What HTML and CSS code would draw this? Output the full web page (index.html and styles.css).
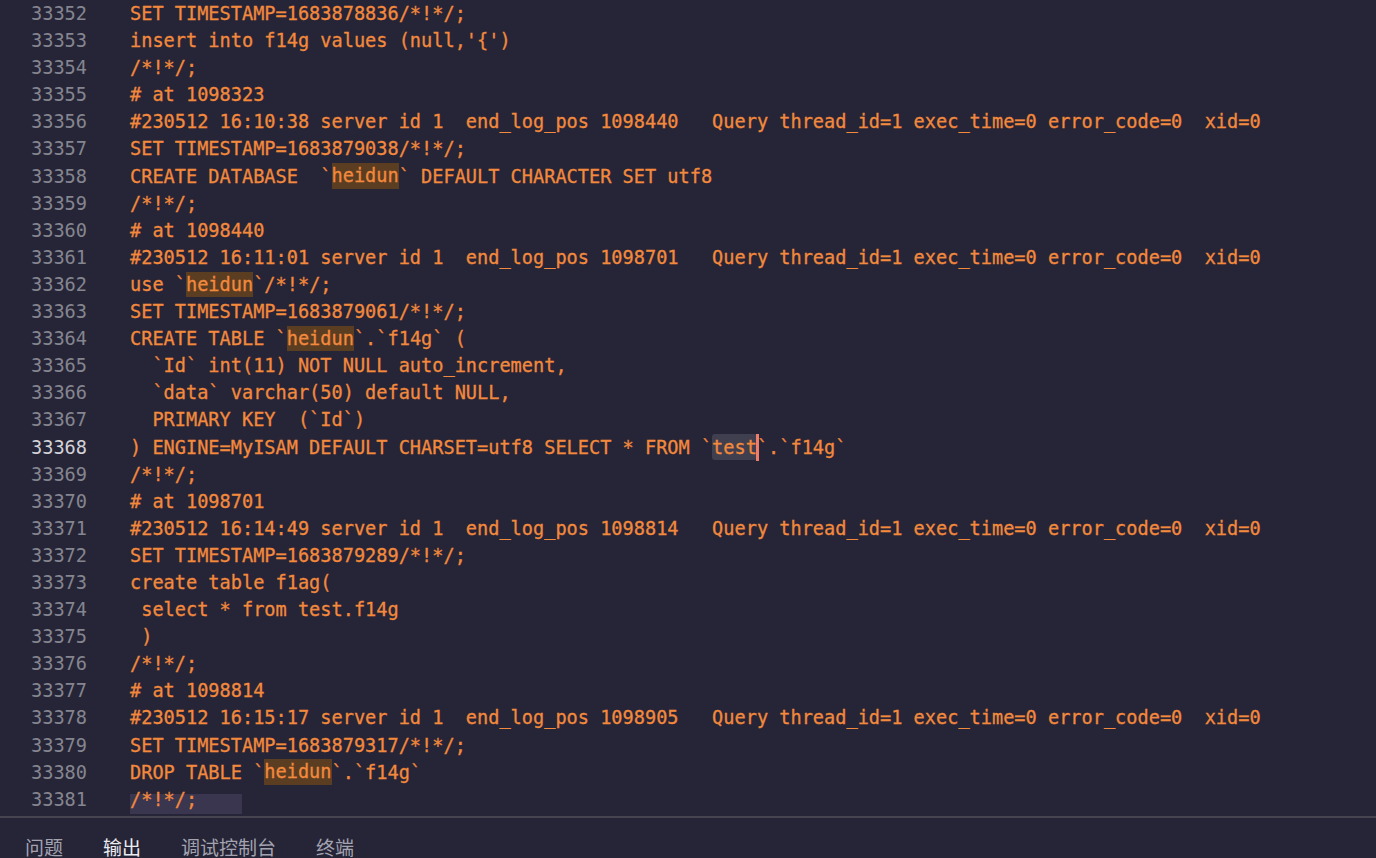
FILE: index.html
```html
<!DOCTYPE html>
<html lang="zh-CN">
<head>
    <meta charset="UTF-8">
    <title>binlog.sql - 输出</title>
    <link rel="stylesheet" href="styles.css">
</head>
<body>
    <div class="editor">
        <div class="line"><span class="ln">33352</span><span class="code">SET TIMESTAMP=1683878836/*!*/;</span></div>
        <div class="line"><span class="ln">33353</span><span class="code">insert into f14g values (null,'{')</span></div>
        <div class="line"><span class="ln">33354</span><span class="code">/*!*/;</span></div>
        <div class="line"><span class="ln">33355</span><span class="code"># at 1098323</span></div>
        <div class="line"><span class="ln">33356</span><span class="code">#230512 16:10:38 server id 1  end_log_pos 1098440   Query thread_id=1 exec_time=0 error_code=0  xid=0</span></div>
        <div class="line"><span class="ln">33357</span><span class="code">SET TIMESTAMP=1683879038/*!*/;</span></div>
        <div class="line"><span class="ln">33358</span><span class="code">CREATE DATABASE  `<span class="hl">heidun</span>` DEFAULT CHARACTER SET utf8</span></div>
        <div class="line"><span class="ln">33359</span><span class="code">/*!*/;</span></div>
        <div class="line"><span class="ln">33360</span><span class="code"># at 1098440</span></div>
        <div class="line"><span class="ln">33361</span><span class="code">#230512 16:11:01 server id 1  end_log_pos 1098701   Query thread_id=1 exec_time=0 error_code=0  xid=0</span></div>
        <div class="line"><span class="ln">33362</span><span class="code">use `<span class="hl">heidun</span>`/*!*/;</span></div>
        <div class="line"><span class="ln">33363</span><span class="code">SET TIMESTAMP=1683879061/*!*/;</span></div>
        <div class="line"><span class="ln">33364</span><span class="code">CREATE TABLE `<span class="hl">heidun</span>`.`f14g` (</span></div>
        <div class="line"><span class="ln">33365</span><span class="code">  `Id` int(11) NOT NULL auto_increment,</span></div>
        <div class="line"><span class="ln">33366</span><span class="code">  `data` varchar(50) default NULL,</span></div>
        <div class="line"><span class="ln">33367</span><span class="code">  PRIMARY KEY  (`Id`)</span></div>
        <div class="line current"><span class="ln">33368</span><span class="code">) ENGINE=MyISAM DEFAULT CHARSET=utf8 SELECT * FROM `<span class="match">test</span><span class="caret"></span>`.`f14g`</span></div>
        <div class="line"><span class="ln">33369</span><span class="code">/*!*/;</span></div>
        <div class="line"><span class="ln">33370</span><span class="code"># at 1098701</span></div>
        <div class="line"><span class="ln">33371</span><span class="code">#230512 16:14:49 server id 1  end_log_pos 1098814   Query thread_id=1 exec_time=0 error_code=0  xid=0</span></div>
        <div class="line"><span class="ln">33372</span><span class="code">SET TIMESTAMP=1683879289/*!*/;</span></div>
        <div class="line"><span class="ln">33373</span><span class="code">create table f1ag(</span></div>
        <div class="line"><span class="ln">33374</span><span class="code"> select * from test.f14g</span></div>
        <div class="line"><span class="ln">33375</span><span class="code"> )</span></div>
        <div class="line"><span class="ln">33376</span><span class="code">/*!*/;</span></div>
        <div class="line"><span class="ln">33377</span><span class="code"># at 1098814</span></div>
        <div class="line"><span class="ln">33378</span><span class="code">#230512 16:15:17 server id 1  end_log_pos 1098905   Query thread_id=1 exec_time=0 error_code=0  xid=0</span></div>
        <div class="line"><span class="ln">33379</span><span class="code">SET TIMESTAMP=1683879317/*!*/;</span></div>
        <div class="line"><span class="ln">33380</span><span class="code">DROP TABLE `<span class="hl">heidun</span>`.`f14g`</span></div>
        <div class="line"><span class="ln">33381</span><span class="code"><span class="sel">/*!*/;</span></span></div>
    </div>

    <div class="panel">
        <div class="tabs">
            <span class="tab">问题</span>
            <span class="tab active">输出</span>
            <span class="tab">调试控制台</span>
            <span class="tab">终端</span>
        </div>
    </div>
</body>
</html>
```

FILE: styles.css
```css
html, body {
    margin: 0;
    height: 858px;
    overflow: hidden;
    background-color: #262537;
}
.editor {
    height: 815px;
    padding-top: 0;
    overflow: hidden;
    font-family: "DejaVu Sans Mono", "Liberation Mono", monospace;
    font-size: 18.6px;
}
.line {
    display: flex;
    height: 27.1px;
    line-height: 27.1px;
    white-space: pre;
}
.ln {
    width: 87px;
    flex-shrink: 0;
    text-align: right;
    color: #858590;
}
.line.current .ln {
    color: #d2d2d8;
}
.code {
    margin-left: 43px;
    color: #f3893c;
    -webkit-text-stroke: 0.3px #f3893c;
}
.hl {
    background-color: #5b3e22;
    padding: 2.2px 0;
}
.match {
    background-color: #403f4f;
    border-radius: 3px;
    padding: 2.7px 0;
}
.caret {
    display: inline-block;
    width: 3px;
    height: 27px;
    margin: 0 -2px 0 -1px;
    vertical-align: top;
    background-color: #f07c6c;
}
.sel {
    display: inline-block;
    position: relative;
    z-index: 0;
}
.sel::before {
    content: "";
    position: absolute;
    left: 0;
    top: 8px;
    width: 112px;
    height: 20px;
    background-color: #3b3650;
    z-index: -1;
}
.panel {
    border-top: 2px solid #46454f;
    margin-top: 1px;
    height: 40px;
}
.tabs {
    display: flex;
    gap: 40px;
    padding: 18px 0 0 25px;
    font-family: "Noto Sans CJK SC", "Noto Sans", sans-serif;
    font-size: 19px;
    line-height: 22px;
    color: #a3a3b0;
}
.tab.active {
    color: #ececf0;
}
```
